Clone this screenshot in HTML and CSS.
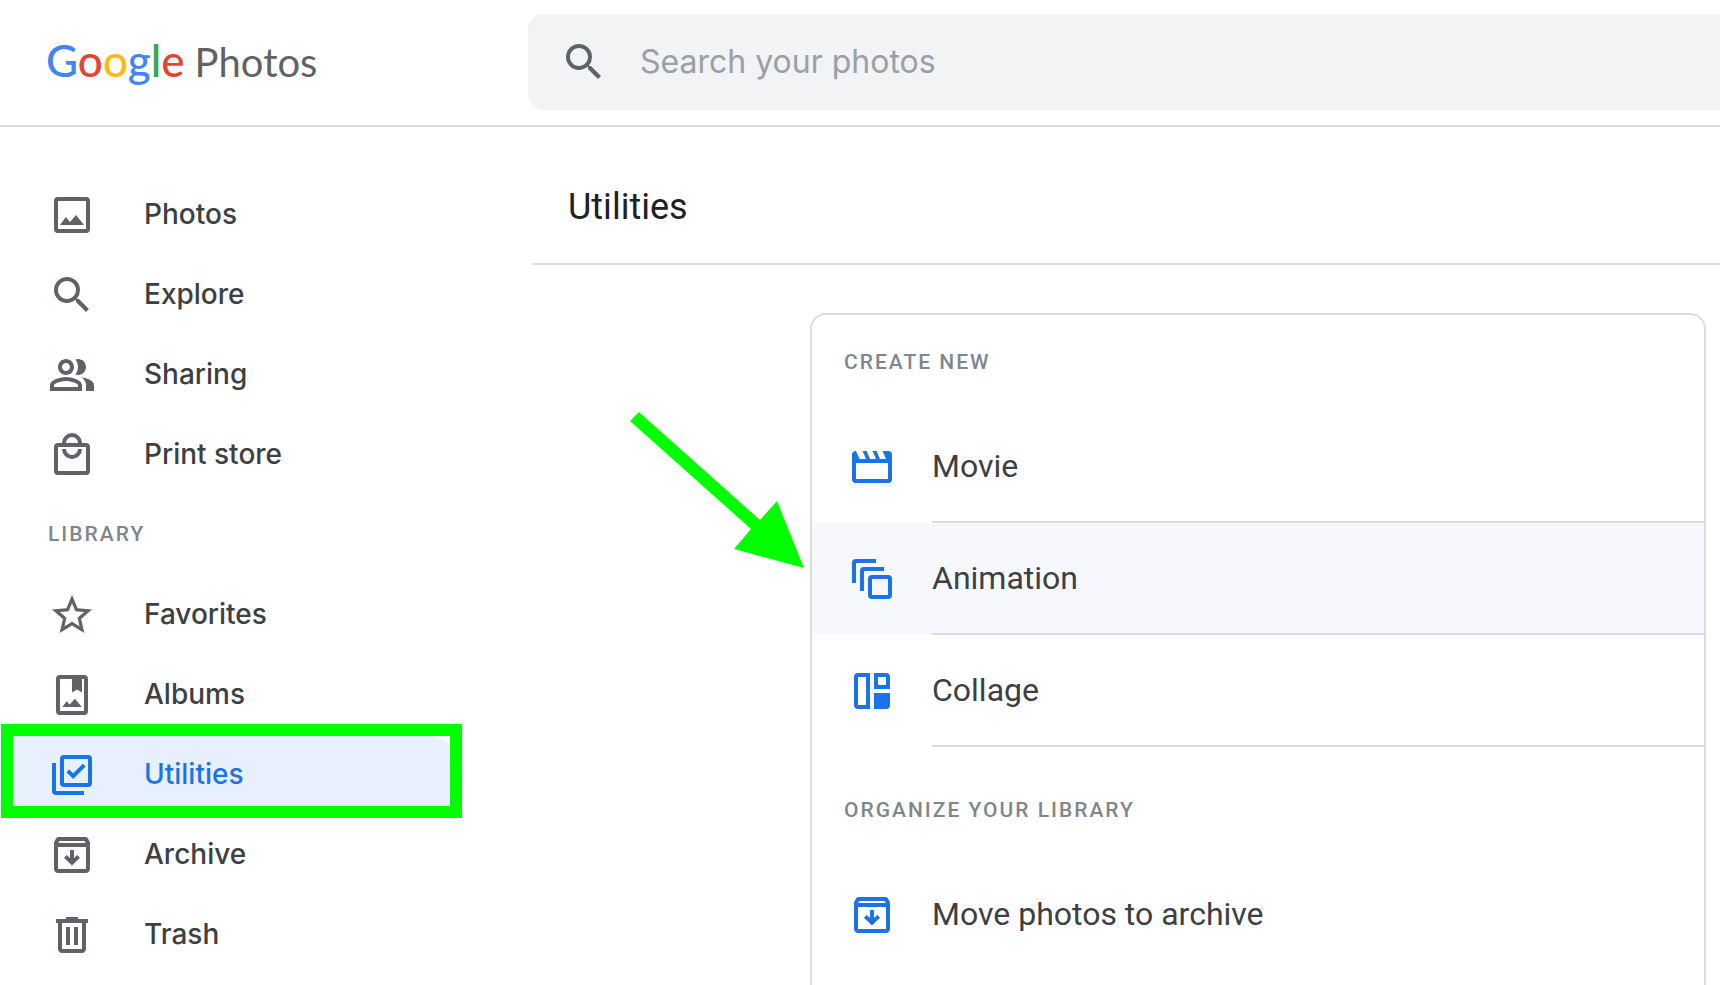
FILE: index.html
```html
<!DOCTYPE html>
<html lang="en">
<head>
<meta charset="utf-8">
<meta name="viewport" content="width=device-width, initial-scale=1">
<title>Utilities - Google Photos</title>
<link rel="stylesheet" href="styles.css">
</head>
<body>
<svg class="sprite" aria-hidden="true">
  <symbol id="i-search" viewBox="0 0 24 24"><path d="M15.5 14h-.79l-.28-.27A6.471 6.471 0 0 0 16 9.5 6.5 6.5 0 1 0 9.5 16c1.61 0 3.09-.59 4.23-1.57l.27.28v.79l5 4.99L20.49 19l-4.99-5zm-6 0C7.01 14 5 11.99 5 9.500S7.01 5 9.500 5 14 7.010 14 9.500 11.990 14 9.500 14z"/></symbol>
  <symbol id="i-photos" viewBox="0 0 24 24"><path fill-rule="evenodd" d="M5 3h14a2 2 0 0 1 2 2v14a2 2 0 0 1-2 2H5a2 2 0 0 1-2-2V5a2 2 0 0 1 2-2zm0 2v14h14V5zM6 17l2.900-4 2.100 2.500 3-3.500 4 5z"/></symbol>
  <symbol id="i-sharing" viewBox="0 0 24 24"><path d="M16.670 13.130C18.040 14.060 19 15.320 19 17v3h4v-3c0-2.180-3.570-3.470-6.330-3.870zM15 12c2.210 0 4-1.790 4-4s-1.790-4-4-4c-.47 0-.91.1-1.330.24C14.500 5.270 15 6.580 15 8s-.5 2.730-1.330 3.760c.42.14.86.24 1.330.24zM9 12c2.210 0 4-1.790 4-4s-1.790-4-4-4-4 1.790-4 4 1.790 4 4 4zm0-6c1.100 0 2 .9 2 2s-.9 2-2 2-2-.9-2-2 .9-2 2-2zM9 13c-2.670 0-8 1.340-8 4v3h16v-3c0-2.660-5.330-4-8-4zm6 5H3v-.99C3.200 16.290 6.300 15 9 15s5.800 1.290 6 2v1z"/></symbol>
  <symbol id="i-print" viewBox="0 0 24 24"><g fill="none" stroke="currentColor" stroke-width="2"><rect x="4" y="7" width="16" height="14" rx="1"/><path d="M8 6.500V6a4 4 0 0 1 8 0v.5M8 9a4 4 0 0 0 8 0"/></g></symbol>
  <symbol id="i-star" viewBox="0 0 24 24"><path d="M22 9.240l-7.190-.62L12 2 9.190 8.630 2 9.240l5.460 4.730L5.820 21 12 17.270 18.180 21l-1.630-7.030L22 9.240zM12 15.400l-3.760 2.270 1-4.280-3.320-2.880 4.380-.38L12 6.100l1.710 4.040 4.380.38-3.320 2.880 1 4.280L12 15.400z"/></symbol>
  <symbol id="i-albums" viewBox="0 0 24 24"><path fill-rule="evenodd" d="M6 2h12a2 2 0 0 1 2 2v16a2 2 0 0 1-2 2H6a2 2 0 0 1-2-2V4a2 2 0 0 1 2-2zm0 2v16h12V4h-1v6.800l-2.500-1.600-2.500 1.600V4zM7.200 18l2.100-2.900 1.500 1.700 2.700-2.900 3.400 4.100z"/></symbol>
  <symbol id="i-utilities" viewBox="0 0 24 24"><g fill="none" stroke="currentColor" stroke-width="2"><rect x="7" y="3" width="14" height="14" rx="1"/><path d="M3 6v14a1 1 0 0 0 1 1h14M9.900 9.900l2.700 2.700L18.100 7.100"/></g></symbol>
  <symbol id="i-archive" viewBox="0 0 24 24"><path fill-rule="evenodd" d="M18.500 3h-13c-.6 0-1.100.2-1.500.7L3.400 4.900C3.100 5.300 3 5.800 3 6.300V19c0 1.100.9 2 2 2h14c1.100 0 2-.9 2-2V6.300c0-.5-.1-1-.4-1.400L20 3.700c-.4-.5-.9-.7-1.500-.7zM5.800 5h12.400l.7 1H5.100zM5 8h14v11H5z"/><path fill="none" stroke="currentColor" stroke-width="2" d="M12 9.500v6.300M8.700 12.700l3.300 3.200 3.300-3.200"/></symbol>
  <symbol id="i-trash" viewBox="0 0 24 24"><path fill-rule="evenodd" d="M15 4V3H9v1H4v2h1v13c0 1.100.9 2 2 2h10c1.100 0 2-.9 2-2V6h1V4zm2 15H7V6h10zM9 8h2v9H9zm4 0h2v9h-2z"/></symbol>
  <symbol id="i-movie" viewBox="0 0 24 24"><path fill-rule="evenodd" d="M4 4l1.800 4H9L7.300 4h2L11 8h3l-1.700-4h2L16 8h3l-1.700-4H20a2 2 0 0 1 2 2v12a2 2 0 0 1-2 2H4a2 2 0 0 1-2-2V6a2 2 0 0 1 2-2zm0 6v8h16v-8z"/></symbol>
  <symbol id="i-animation" viewBox="0 0 24 24"><g fill="none" stroke="currentColor" stroke-width="2"><rect x="11" y="11" width="10" height="10" rx="1"/><path d="M18 7H8a1 1 0 0 0-1 1v10M14 3H4a1 1 0 0 0-1 1v10"/></g></symbol>
  <symbol id="i-collage" viewBox="0 0 24 24"><path fill-rule="evenodd" d="M5 3h6v18H5a2 2 0 0 1-2-2V5a2 2 0 0 1 2-2zm0 2v14h4V5zM13 3h6a2 2 0 0 1 2 2v6h-8zm2 2v4h4V5zM13 13h8v6a2 2 0 0 1-2 2h-6z"/></symbol>
</svg>

<header class="topbar">
  <a class="logo" href="#" aria-label="Google Photos">
    <span class="logo-google"><span class="g-blue">G</span><span class="g-red">o</span><span class="g-yellow">o</span><span class="g-blue">g</span><span class="g-green">l</span><span class="g-red">e</span></span>
    <span class="logo-product">Photos</span>
  </a>
  <form class="search" role="search">
    <label class="search-label" for="q" aria-label="Search"><svg class="icon"><use href="#i-search"/></svg></label>
    <input class="search-input" id="q" type="text" placeholder="Search your photos">
  </form>
</header>

<div class="layout">
  <nav class="sidebar" aria-label="Main">
    <a class="nav-item" href="#"><svg class="icon"><use href="#i-photos"/></svg><span class="nav-label">Photos</span></a>
    <a class="nav-item" href="#"><svg class="icon"><use href="#i-search"/></svg><span class="nav-label">Explore</span></a>
    <a class="nav-item" href="#"><svg class="icon"><use href="#i-sharing"/></svg><span class="nav-label">Sharing</span></a>
    <a class="nav-item" href="#"><svg class="icon"><use href="#i-print"/></svg><span class="nav-label">Print store</span></a>
    <h2 class="overline nav-heading">LIBRARY</h2>
    <a class="nav-item" href="#"><svg class="icon"><use href="#i-star"/></svg><span class="nav-label">Favorites</span></a>
    <a class="nav-item" href="#"><svg class="icon"><use href="#i-albums"/></svg><span class="nav-label">Albums</span></a>
    <a class="nav-item nav-item-active" href="#" aria-current="page"><svg class="icon"><use href="#i-utilities"/></svg><span class="nav-label">Utilities</span><span class="highlight"></span></a>
    <a class="nav-item" href="#"><svg class="icon"><use href="#i-archive"/></svg><span class="nav-label">Archive</span></a>
    <a class="nav-item" href="#"><svg class="icon"><use href="#i-trash"/></svg><span class="nav-label">Trash</span></a>
  </nav>

  <main class="main">
    <h1 class="page-title">Utilities</h1>
    <section class="card">
      <h2 class="overline card-heading">CREATE NEW</h2>
      <a class="action" href="#"><svg class="icon"><use href="#i-movie"/></svg><span class="action-label">Movie</span></a>
      <a class="action action-hover" href="#"><svg class="icon"><use href="#i-animation"/></svg><span class="action-label">Animation</span></a>
      <a class="action" href="#"><svg class="icon"><use href="#i-collage"/></svg><span class="action-label">Collage</span></a>
      <h2 class="overline card-heading card-heading-next">ORGANIZE YOUR LIBRARY</h2>
      <a class="action" href="#"><svg class="icon"><use href="#i-archive"/></svg><span class="action-label action-label-last">Move photos to archive</span></a>
      <svg class="arrow" viewBox="0 0 174 156" aria-hidden="true"><path d="M0 9L9 0l121 108 17-19 27 67-70-19 17-20z"/></svg>
    </section>
  </main>
</div>
</body>
</html>
```

FILE: styles.css
```css
* {
  box-sizing: border-box;
}

body {
  margin: 0;
  height: 100vh;
  display: flex;
  flex-direction: column;
  overflow: hidden;
  background: #fff;
  color: #3c4043;
  font-family: Roboto, "Liberation Sans", sans-serif;
}

a {
  color: inherit;
  text-decoration: none;
}

.sprite {
  display: none;
}

.icon {
  width: 48px;
  height: 48px;
  flex: none;
  display: block;
  fill: currentColor;
  color: #5f6368;
}

.overline {
  margin: 0;
  padding-bottom: 2px;
  display: flex;
  align-items: center;
  font-size: 21px;
  font-weight: 500;
  letter-spacing: 2px;
  color: #80868b;
}

/* Top bar */

.topbar {
  flex: none;
  display: grid;
  grid-template-columns: 528px 1fr;
  align-items: center;
  padding: 14px 0 15px;
  border-bottom: 2px solid #dadce0;
}

.logo {
  display: flex;
  align-items: baseline;
  gap: 10px;
  padding: 0 0 4px 46px;
  font-family: Lato, "Open Sans", sans-serif;
}

.logo-google {
  font-size: 44px;
  font-weight: 500;
}

.logo-product {
  font-size: 40px;
  color: #5f6368;
}

.g-blue { color: #4285f4; }
.g-red { color: #ea4335; }
.g-yellow { color: #fbbc04; }
.g-green { color: #34a853; }

.search {
  display: flex;
  align-items: center;
  gap: 32px;
  height: 96px;
  padding-left: 32px;
  border-radius: 16px 0 0 16px;
  background: #f1f3f4;
}

.search-label {
  flex: none;
}

.search-input {
  flex: 1;
  min-width: 0;
  padding: 0 0 2px;
  border: 0;
  outline: 0;
  background: none;
  color: #3c4043;
  font-family: Inter, sans-serif;
  font-size: 32px;
}

.search-input::placeholder {
  color: #9aa0a6;
  opacity: 1;
}

/* Side navigation */

.layout {
  flex: 1;
  min-height: 0;
  display: grid;
  grid-template-columns: 532px 1fr;
}

.sidebar {
  padding: 48px 68px 0 0;
}

.nav-item {
  position: relative;
  display: flex;
  align-items: center;
  gap: 48px;
  height: 80px;
  padding-left: 48px;
  border-radius: 0 40px 40px 0;
  font-family: Inter, sans-serif;
  font-size: 28px;
  font-weight: 500;
}

.nav-label {
  padding-bottom: 2px;
}

.nav-item-active,
.nav-item-active .icon {
  color: #1a73e8;
}

.nav-item-active {
  background: #e8f0fe;
}

.nav-heading {
  height: 80px;
  padding-left: 48px;
}

.highlight {
  position: absolute;
  inset: -11px 2px -3px 1px;
  border: 12px solid #00ff00;
}

/* Main column */

.main {
  min-width: 0;
  display: flex;
  flex-direction: column;
}

.page-title {
  flex: none;
  margin: 0;
  padding: 56px 36px 32px;
  border-bottom: 2px solid #dadce0;
  color: #202124;
  font-size: 36px;
  font-weight: 400;
  line-height: 48px;
}

.card {
  position: relative;
  flex: 1;
  width: calc(100% - 14px);
  max-width: 896px;
  margin: 48px 14px 0 auto;
  border: 2px solid #dadce0;
  border-bottom: 0;
  border-radius: 16px 16px 0 0;
}

.card-heading {
  height: 96px;
  padding-left: 32px;
}

.card-heading-next {
  margin-top: 16px;
}

.action {
  display: flex;
  align-items: center;
  gap: 36px;
  height: 112px;
  padding-left: 36px;
  font-size: 32px;
}

.action .icon {
  color: #1a73e8;
}

.action-hover {
  background: #f6f8fe;
}

.action-label {
  flex: 1;
  align-self: stretch;
  display: flex;
  align-items: center;
  border-bottom: 2px solid #dadce0;
}

.action-label-last {
  border-bottom-color: transparent;
}

.arrow {
  position: absolute;
  top: 97px;
  left: -182px;
  width: 174px;
  height: 156px;
  fill: #00ff00;
}
```
